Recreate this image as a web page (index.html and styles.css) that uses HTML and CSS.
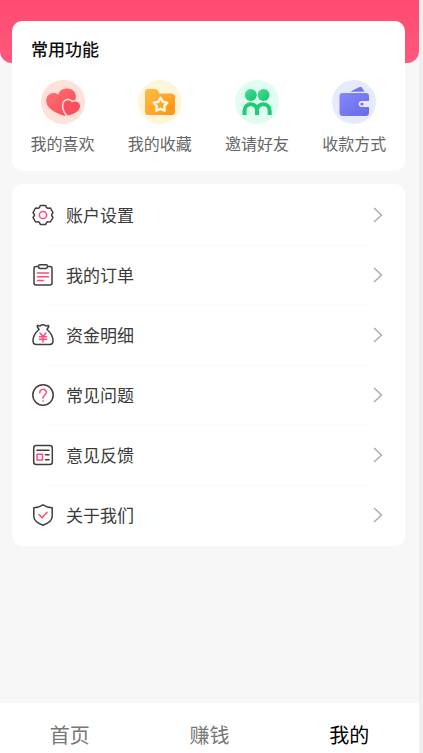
FILE: index.html
```html
<!DOCTYPE html>
<html lang="zh-CN">
<head>
<meta charset="utf-8">
<meta name="viewport" content="width=device-width, initial-scale=1">
<title>我的</title>
<link rel="stylesheet" href="styles.css">
</head>
<body>
<div class="page">
  <main class="content">
    <section class="card features">
      <h1 class="features-title">常用功能</h1>
      <div class="feature-grid">
        <a class="feature" href="#likes">
          <svg class="feature-icon" viewBox="0 0 44 44" aria-hidden="true">
            <defs>
              <linearGradient id="red" x1="0" y1="0" x2="1" y2="1"><stop offset="0" stop-color="#ff7376"/><stop offset="1" stop-color="#fb4654"/></linearGradient>
            </defs>
            <circle cx="22" cy="22" r="22" fill="#fee1d9"/>
            <path d="M24.500 36C17 34 9 30.500 6 24.500C3.500 18 7.500 13 12.500 13C14.500 13 16 13.600 17.200 14.500C18.500 10.500 22 8.500 26 8.500C32 8.500 36 13 34.600 19C33.300 25 28 31 24.500 36Z" fill="url(#red)"/>
            <path d="M26.500 35.500C23.500 32 21.500 27 22.800 23.500C24 19.500 29 19.300 30.800 22.500C34 20.300 39 22 39 26C39 31 33 34.500 26.500 35.500Z" fill="#fb505b" stroke="#fee1d9" stroke-width="3" paint-order="stroke"/>
          </svg>
          <span>我的喜欢</span>
        </a>
        <a class="feature" href="#favorites">
          <svg class="feature-icon" viewBox="0 0 44 44" aria-hidden="true">
            <defs>
              <linearGradient id="orange" x1="0" y1="0" x2="1" y2="1"><stop offset="0" stop-color="#ffbd48"/><stop offset="1" stop-color="#ff930f"/></linearGradient>
            </defs>
            <circle cx="22" cy="22" r="22" fill="#fef6db"/>
            <path d="M7 12Q7 9 10 9H17Q19 9 20 11L21.500 13.500H33Q37 13.500 37 17V31.500Q37 35 33.500 35H10.500Q7 35 7 31.500Z" fill="url(#orange)"/>
            <path d="M22.500 17.800L24.800 21.800L29.300 22.700L26.200 26.100L26.700 30.700L22.500 28.800L18.300 30.700L18.800 26.100L15.700 22.700L20.200 21.800Z" fill="none" stroke="#fff7e6" stroke-width="2.400" stroke-linejoin="round"/>
          </svg>
          <span>我的收藏</span>
        </a>
        <a class="feature" href="#invite">
          <svg class="feature-icon" viewBox="0 0 44 44" aria-hidden="true">
            <defs>
              <linearGradient id="green" x1="0" y1="0" x2="1" y2="1"><stop offset="0" stop-color="#4adc98"/><stop offset="1" stop-color="#16c46a"/></linearGradient>
            </defs>
            <circle cx="22" cy="22" r="22" fill="#dffdf0"/>
            <circle cx="15.800" cy="15" r="6" fill="url(#green)"/>
            <circle cx="28.500" cy="15" r="6" fill="url(#green)"/>
            <path d="M9.500 35V31C9.500 22 22 22 22 30.500V35M22 35V30.500C22 22 34.700 22 34.700 31V35" fill="none" stroke="#20cb78" stroke-width="4"/>
          </svg>
          <span>邀请好友</span>
        </a>
        <a class="feature" href="#payment">
          <svg class="feature-icon" viewBox="0 0 44 44" aria-hidden="true">
            <defs>
              <linearGradient id="blue" x1="0" y1="0" x2="1" y2="1"><stop offset="0" stop-color="#8587fb"/><stop offset="1" stop-color="#686ae8"/></linearGradient>
            </defs>
            <circle cx="22" cy="22" r="22" fill="#e6eafe"/>
            <path d="M18 11.700L27.500 7Q29 6.400 30 7.800L32.500 11.700Z" fill="#7477f1"/>
            <path d="M10.500 13H34Q37 13 37 16V21H30.500Q26.500 21 26.500 24T30.500 27H37V32.500Q37 36 33.500 36H11Q7.500 36 7.500 32.500V16Q7.500 13 10.500 13Z" fill="url(#blue)"/>
            <path d="M38 21H30.500a3 3 0 0 0 0 6H38Z" fill="#e6eafe"/>
            <circle cx="30" cy="24" r="1.600" fill="#7073ef"/>
          </svg>
          <span>收款方式</span>
        </a>
      </div>
    </section>

    <ul class="card menu">
      <li><a class="menu-link" href="#settings">
        <svg class="menu-icon" viewBox="0 0 22 22" aria-hidden="true"><path d="M8.300 1.500H13.700L14.600 3.600Q15.300 4.400 16.400 4.200L18.400 4L21 8.600L19.800 10.200Q19.400 11 19.800 11.800L21 13.400L18.400 18L16.400 17.800Q15.300 17.600 14.600 18.400L13.700 20.500H8.300L7.400 18.400Q6.700 17.600 5.600 17.800L3.600 18L1 13.400L2.200 11.800Q2.600 11 2.200 10.200L1 8.600L3.600 4L5.600 4.200Q6.700 4.400 7.400 3.600Z"/><circle class="accent" cx="11" cy="11" r="3.600"/></svg>
        <span class="menu-label">账户设置</span>
        <svg class="arrow" viewBox="0 0 10 16" aria-hidden="true"><path d="M1 1L8.500 8L1 15"/></svg>
      </a></li>
      <li><a class="menu-link" href="#orders">
        <svg class="menu-icon" viewBox="0 0 22 22" aria-hidden="true"><path d="M6.500 2.500H4Q2 2.500 2 4.500V19Q2 21 4 21H18Q20 21 20 19V4.500Q20 2.500 18 2.500H15.500M8 .8H14Q15.500 .8 15.500 2.500T14 4.400H8Q6.500 4.400 6.500 2.500T8 .8Z"/><path class="accent" d="M5.500 9H16.500M5.500 12.800H16.500M5.500 16.500H11.500"/></svg>
        <span class="menu-label">我的订单</span>
        <svg class="arrow" viewBox="0 0 10 16" aria-hidden="true"><path d="M1 1L8.500 8L1 15"/></svg>
      </a></li>
      <li><a class="menu-link" href="#funds">
        <svg class="menu-icon" viewBox="0 0 22 22" aria-hidden="true"><path d="M7 5.500L5.200 2.500Q5.200 1 7 1.700Q8.200 2.300 9.200 1.200Q11 .2 12.800 1.200Q13.800 2.300 15 1.700Q16.800 1 16.800 2.500L15 5.500C18.500 8.500 21 13.500 21 17Q21 20.500 17.500 20.500H4.500Q1 20.500 1 17C1 13.500 3.500 8.500 7 5.500Z"/><path class="accent" d="M8 9L11 12.500L14 9M11 12.500V18M7.500 12.800H14.500M7.500 15.200H14.500"/></svg>
        <span class="menu-label">资金明细</span>
        <svg class="arrow" viewBox="0 0 10 16" aria-hidden="true"><path d="M1 1L8.500 8L1 15"/></svg>
      </a></li>
      <li><a class="menu-link" href="#faq">
        <svg class="menu-icon" viewBox="0 0 22 22" aria-hidden="true"><circle cx="11" cy="11" r="10.200"/><path class="accent" d="M7.800 8.700C7.800 4.300 14.300 4.300 14.300 8.500C14.300 11 11 11 11 14.200M11 16.800V17"/></svg>
        <span class="menu-label">常见问题</span>
        <svg class="arrow" viewBox="0 0 10 16" aria-hidden="true"><path d="M1 1L8.500 8L1 15"/></svg>
      </a></li>
      <li><a class="menu-link" href="#feedback">
        <svg class="menu-icon" viewBox="0 0 22 22" aria-hidden="true"><rect x="1.700" y="1.500" width="18.600" height="19" rx="2.500"/><path d="M5 6.200H17M13.500 10.700H17M13.500 15.700H17"/><rect class="accent" x="5" y="10.300" width="5.500" height="5.800"/></svg>
        <span class="menu-label">意见反馈</span>
        <svg class="arrow" viewBox="0 0 10 16" aria-hidden="true"><path d="M1 1L8.500 8L1 15"/></svg>
      </a></li>
      <li><a class="menu-link" href="#about">
        <svg class="menu-icon" viewBox="0 0 22 22" aria-hidden="true"><path d="M11 .8Q15 3.300 20.200 3.800V12.500C20.200 17 15.500 19.500 11 21.200C6.500 19.500 1.800 17 1.800 12.500V3.800Q7 3.300 11 .8Z"/><path class="accent" d="M7 10.500L10.200 13.700L15 8.300"/></svg>
        <span class="menu-label">关于我们</span>
        <svg class="arrow" viewBox="0 0 10 16" aria-hidden="true"><path d="M1 1L8.500 8L1 15"/></svg>
      </a></li>
    </ul>
  </main>
  <nav class="tabs">
    <a class="tab" href="#home">首页</a>
    <a class="tab" href="#earn">赚钱</a>
    <a class="tab tab-active" href="#me" aria-current="page">我的</a>
  </nav>
</div>
</body>
</html>
```

FILE: styles.css
```css
* {
  box-sizing: border-box;
}

body {
  margin: 0;
  background: #f7f7f7;
  font-family: "Noto Sans CJK SC", sans-serif;
  color: #3a3a3a;
}

a {
  color: inherit;
  text-decoration: none;
}

.page {
  display: flex;
  flex-direction: column;
  min-height: 100vh;
  border-right: 4px solid #efefef;
}

.content {
  position: relative;
  z-index: 0;
  flex: 1;
  display: flex;
  flex-direction: column;
  gap: 13px;
  padding: 21px 14px 24px 12px;
}

/* Rounded banner behind the first card */
.content::before {
  content: "";
  position: absolute;
  z-index: -1;
  inset: 0 0 auto;
  height: 63px;
  border-radius: 0 0 12px 12px;
  background: linear-gradient(#ff4a70, #ff587c);
}

.card {
  margin: 0;
  border-radius: 10px;
  background: #fff;
}

.features {
  padding: 16px 2px;
}

.features-title {
  margin: 0 17px 19px;
  font-size: 17px;
  line-height: 24px;
  font-weight: 500;
  color: #111;
}

.feature-grid {
  display: grid;
  grid-template-columns: repeat(4, 1fr);
}

.feature {
  display: flex;
  flex-direction: column;
  align-items: center;
  gap: 7px;
  font-size: 16px;
  line-height: 24px;
  color: #666;
}

.feature-icon {
  width: 44px;
  height: 44px;
}

.menu {
  padding: 1px 0;
  list-style: none;
}

.menu-link {
  display: flex;
  align-items: center;
  height: 60px;
  padding: 0 22px 0 20px;
}

.menu li + li::before {
  content: "";
  display: block;
  height: 1px;
  margin: 0 34px -1px 36px;
  background: #fafafa;
}

.menu-icon {
  width: 22px;
  height: 22px;
  fill: none;
  stroke: #443c3c;
  stroke-width: 1.5;
  stroke-linecap: round;
  stroke-linejoin: round;
}

.menu-icon .accent {
  stroke: #ff4b75;
}

.menu-label {
  flex: 1;
  margin-left: 12px;
  font-size: 17px;
  line-height: 24px;
}

.arrow {
  width: 10px;
  height: 16px;
  fill: none;
  stroke: #a5a5aa;
  stroke-width: 1.3;
}

.tabs {
  display: grid;
  grid-template-columns: repeat(3, 1fr);
  height: 50px;
  padding-top: 18px;
  overflow: hidden;
  background: #fff;
}

.tab {
  text-align: center;
  font-size: 20px;
  line-height: 28px;
  color: #777;
}

.tab-active {
  color: #000;
}
```
